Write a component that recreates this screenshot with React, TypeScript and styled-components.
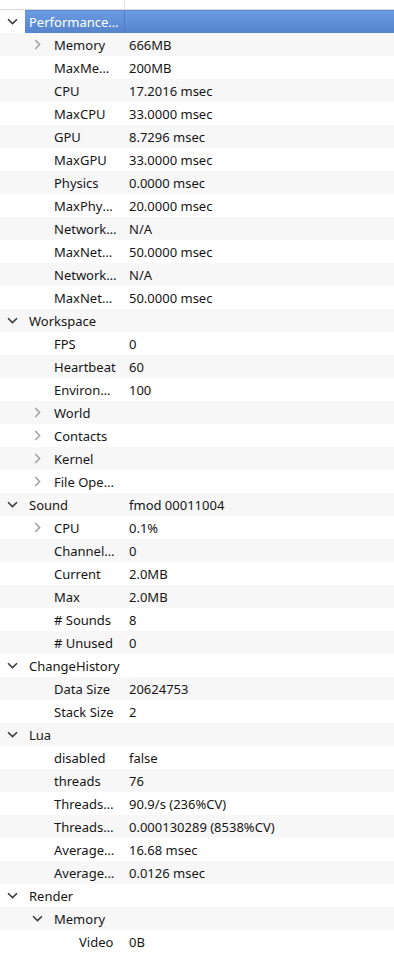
import React from "react"
import styled, { createGlobalStyle, css } from "styled-components"

type Node = {
  name: string
  value?: string
  open?: boolean
  children?: Node[]
  selected?: boolean
}

const leaf = (name: string, value?: string): Node => ({ name, value })
const closed = (name: string, value?: string): Node => ({ name, value, open: false, children: [] })

const tree: Node[] = [
  {
    name: "PerformanceStats",
    open: true,
    selected: true,
    children: [
      closed("Memory", "666MB"),
      leaf("MaxMemory", "200MB"),
      leaf("CPU", "17.2016 msec"),
      leaf("MaxCPU", "33.0000 msec"),
      leaf("GPU", "8.7296 msec"),
      leaf("MaxGPU", "33.0000 msec"),
      leaf("Physics", "0.0000 msec"),
      leaf("MaxPhysics", "20.0000 msec"),
      leaf("NetworkSend", "N/A"),
      leaf("MaxNetworkSend", "50.0000 msec"),
      leaf("NetworkReceive", "N/A"),
      leaf("MaxNetworkReceive", "50.0000 msec"),
    ],
  },
  {
    name: "Workspace",
    open: true,
    children: [
      leaf("FPS", "0"),
      leaf("Heartbeat", "60"),
      leaf("Environment", "100"),
      closed("World"),
      closed("Contacts"),
      closed("Kernel"),
      closed("File Operations"),
    ],
  },
  {
    name: "Sound",
    value: "fmod 00011004",
    open: true,
    children: [
      closed("CPU", "0.1%"),
      leaf("ChannelsPlaying", "0"),
      leaf("Current", "2.0MB"),
      leaf("Max", "2.0MB"),
      leaf("# Sounds", "8"),
      leaf("# Unused", "0"),
    ],
  },
  {
    name: "ChangeHistory",
    open: true,
    children: [leaf("Data Size", "20624753"), leaf("Stack Size", "2")],
  },
  {
    name: "Lua",
    open: true,
    children: [
      leaf("disabled", "false"),
      leaf("threads", "76"),
      leaf("ThreadsResumed", "90.9/s (236%CV)"),
      leaf("ThreadsTime", "0.000130289 (8538%CV)"),
      leaf("AverageFrame", "16.68 msec"),
      leaf("AverageStep", "0.0126 msec"),
    ],
  },
  {
    name: "Render",
    open: true,
    children: [
      {
        name: "Memory",
        open: true,
        children: [leaf("Video", "0B")],
      },
    ],
  },
]

type Flat = { node: Node; depth: number }

const flatten = (nodes: Node[], depth = 0, out: Flat[] = []): Flat[] => {
  nodes.forEach(node => {
    out.push({ node, depth })
    if (node.open && node.children) flatten(node.children, depth + 1, out)
  })
  return out
}

const INDENT = 25
const NAME_COL = 125

const Chevron = ({ open }: { open: boolean }) =>
  open ? (
    <svg width="11" height="7" viewBox="0 0 11 7">
      <path d="M1 1.2 L5.5 5.6 L10 1.2" fill="none" stroke="#3c3c3c" strokeWidth="1.6" />
    </svg>
  ) : (
    <svg width="7" height="11" viewBox="0 0 7 11">
      <path d="M1.2 1 L5.6 5.5 L1.2 10" fill="none" stroke="#a3a3a3" strokeWidth="1.6" />
    </svg>
  )

export default function App() {
  const rows = flatten(tree)
  return (
    <>
      <GlobalStyle />
      <StyledTree>
        <StyledHeader>
          <StyledHeaderCell />
          <StyledHeaderRest />
        </StyledHeader>
        {rows.map(({ node, depth }, i) => (
          <StyledRow key={i} $striped={i % 2 === 1}>
            <StyledIndent style={{ width: depth * INDENT }} />
            <StyledToggle>{node.children && <Chevron open={!!node.open} />}</StyledToggle>
            <StyledCells $selected={!!node.selected}>
              <StyledName
                $selected={!!node.selected}
                $top={depth === 0}
                style={{ width: NAME_COL - (depth + 1) * INDENT }}
              >
                <span>{node.name}</span>
              </StyledName>
              <StyledValue>{node.value}</StyledValue>
            </StyledCells>
          </StyledRow>
        ))}
      </StyledTree>
    </>
  )
}

const GlobalStyle = createGlobalStyle`
  html, body {
    margin: 0;
    padding: 0;
    background: #ffffff;
  }
  body {
    font-family: "Noto Sans", "Open Sans", sans-serif;
    font-size: 13px;
    color: #151515;
  }
`

const StyledTree = styled.div`
  width: 394px;
  height: 956px;
  overflow: hidden;
  background: #ffffff;
`

const StyledHeader = styled.div`
  display: flex;
  height: 9px;
  border-bottom: 1px solid #dadada;
`

const StyledHeaderCell = styled.div`
  width: ${NAME_COL}px;
  border-right: 1px solid #e3e3e3;
  box-sizing: border-box;
`

const StyledHeaderRest = styled.div`
  flex: 1;
`

const StyledRow = styled.div<{ $striped: boolean }>`
  display: flex;
  height: 23px;
  align-items: stretch;
  background: ${p => (p.$striped ? "#f7f7f7" : "#ffffff")};
`

const StyledIndent = styled.div`
  flex-shrink: 0;
`

const StyledToggle = styled.div`
  width: ${INDENT}px;
  flex-shrink: 0;
  display: flex;
  align-items: center;
  justify-content: center;
`

const StyledCells = styled.div<{ $selected: boolean }>`
  flex: 1;
  display: flex;
  min-width: 0;
  ${p =>
    p.$selected &&
    css`
      background: linear-gradient(#6b9be2, #5584cc);
      border-top: 1px solid #5b88cf;
      color: #ffffff;
    `}
`

const StyledName = styled.div<{ $selected: boolean; $top: boolean }>`
  flex-shrink: 0;
  box-sizing: border-box;
  padding: 0 ${p => (p.$top ? 4 : 5)}px 0 4px;
  display: flex;
  align-items: center;
  border-right: 1px solid ${p => (p.$selected ? "#4f7bbf" : "transparent")};

  span {
    white-space: nowrap;
    overflow: hidden;
    text-overflow: ellipsis;
  }
`

const StyledValue = styled.div`
  flex: 1;
  padding-left: 4px;
  display: flex;
  align-items: center;
  white-space: nowrap;
  overflow: hidden;
`
